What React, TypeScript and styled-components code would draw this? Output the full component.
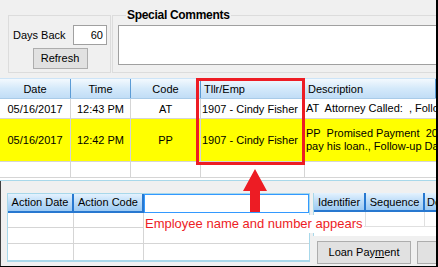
import React from "react";
import styled, { createGlobalStyle } from "styled-components";

const Global = createGlobalStyle`
  html, body { margin: 0; padding: 0; background: #f0f0f0; }
  body { font-family: "Liberation Sans", Arial, sans-serif; font-size: 11px; color: #000; }
  * { box-sizing: border-box; }
`;

const Window = styled.div`
  position: relative;
  width: 438px;
  height: 267px;
  background: #f0f0f0;
  border-right: 2px solid #000;
  border-bottom: 1px solid #000;
  overflow: hidden;
  display: flex;
  flex-direction: column;
`;

const TopSection = styled.div`
  height: 78px;
  display: flex;
  align-items: flex-start;
  padding: 8px 0 0 8px;
  gap: 1px;
`;

const DaysGroup = styled.div`
  margin-top: 7px;
  width: 103px;
  height: 58px;
  border: 1px solid #dcdcdc;
  display: flex;
  flex-direction: column;
  align-items: center;
  padding: 9px 3px 0 4px;
`;

const DaysRow = styled.div`
  width: 100%;
  display: flex;
  align-items: center;
  justify-content: space-between;
`;

const Label = styled.span`
  line-height: 13px;
`;

const NumberInput = styled.div`
  width: 34px;
  height: 20px;
  background: #fff;
  border: 1px solid #a0a0a0;
  text-align: right;
  padding: 2px 3px 0 0;
  line-height: 14px;
`;

const PushButton = styled.div<{ $w: number }>`
  width: ${(p) => p.$w}px;
  height: ${(p) => (p.$w > 80 ? 23 : 21)}px;
  background: #e1e1e1;
  border: 1px solid #adadad;
  display: flex;
  align-items: center;
  justify-content: center;
  line-height: 13px;
  flex-shrink: 0;
  white-space: nowrap;
`;

const RefreshButton = styled(PushButton)`
  margin-top: 3px;
`;

const CommentsGroup = styled.fieldset`
  margin: 0;
  flex: 1;
  height: 65px;
  border: 1px solid #dcdcdc;
  border-right: none;
  padding: 3px 0 0 5px;
  min-width: 0;
`;

const Legend = styled.legend`
  margin-left: 8px;
  padding: 0 1px;
  font-weight: bold;
  font-size: 12px;
  letter-spacing: -0.3px;
  line-height: 14px;
`;

const CommentBox = styled.div`
  height: 40px;
  background: #fff;
  border: 1px solid #a0a0a0;
  border-right: none;
`;

const Grid = styled.div`
  height: 103px;
  background: #fff;
  border-bottom: 1px solid #a8d8ea;
  display: flex;
  flex-direction: column;
`;

const cols = "71px 60px 70px 104px 1fr";

const HeaderRow = styled.div`
  display: grid;
  grid-template-columns: ${cols};
  height: 21px;
  border-top: 1px solid #cde4f7;
  background: linear-gradient(#f3f9fe, #d4e9fa 50%, #c1ddf6);
  border-bottom: 1px solid #a9cbe8;
`;

const HeadCell = styled.div<{ $align?: string }>`
  display: flex;
  align-items: center;
  justify-content: ${(p) => p.$align || "center"};
  padding-left: ${(p) => (p.$align ? 3 : 0)}px;
  border-right: 1px solid #5b9bd5;
  white-space: nowrap;
  overflow: hidden;
`;

const Row = styled.div<{ $h: number; $bg?: string }>`
  display: grid;
  grid-template-columns: ${cols};
  height: ${(p) => p.$h}px;
  background: ${(p) => p.$bg || "#fff"};
  border-bottom: 1px solid #d5d5d5;
`;

const Cell = styled.div<{ $align?: string }>`
  display: flex;
  align-items: center;
  justify-content: ${(p) => p.$align || "center"};
  padding-left: ${(p) => (p.$align ? 1 : 0)}px;
  border-right: 1px solid #d5d5d5;
  white-space: nowrap;
  overflow: hidden;
`;

const DescCell = styled.div`
  display: flex;
  flex-direction: column;
  justify-content: center;
  padding-left: 1px;
  white-space: pre;
  overflow: hidden;
  line-height: 13px;
`;

const LowerPanel = styled.div`
  flex: 1;
  display: flex;
  align-items: flex-start;
  padding: 12px 0 0 6px;
  gap: 3px;
  border-left: 1px solid #404040;
`;

const ActionGrid = styled.div`
  width: 303px;
  height: 69px;
  background: #fff;
  border: 1px solid #a8d8ea;
  border-bottom-width: 2px;
  display: flex;
  flex-direction: column;
`;

const actionCols = "66px 70px 1fr";

const ActionHeader = styled.div`
  display: grid;
  grid-template-columns: ${actionCols};
  height: 19px;
`;

const BlueHeadCell = styled.div<{ $w?: number; $left?: boolean }>`
  display: flex;
  align-items: center;
  justify-content: ${(p) => (p.$left ? "flex-start" : "center")};
  padding-left: ${(p) => (p.$left ? 2 : 0)}px;
  background: linear-gradient(#e4f2fe, #bcdcf8 50%, #9dcaf3);
  border-right: 2px solid #2878d0;
  border-bottom: 2px solid #2878d0;
  white-space: nowrap;
  overflow: hidden;
  ${(p) => (p.$w ? `width: ${p.$w}px; flex-shrink: 0;` : "")}
`;

const FocusCell = styled.div`
  background: #fff;
  border: 1px solid #3399ff;
`;

const ActionRow = styled.div<{ $h: number }>`
  display: grid;
  grid-template-columns: ${actionCols};
  height: ${(p) => p.$h}px;
  border-bottom: 1px solid #d5d5d5;
  &:last-child { border-bottom: none; }
`;

const PlainCell = styled.div`
  border-right: 1px solid #d5d5d5;
  &:last-child { border-right: none; }
`;

const RightColumn = styled.div`
  flex: 1;
  display: flex;
  flex-direction: column;
  gap: 5px;
  min-width: 0;
`;

const IdGrid = styled.div`
  height: 43px;
  background: #fff;
  border-left: 1px solid #a8d8ea;
  display: flex;
  flex-direction: column;
`;

const IdHeader = styled.div`
  display: flex;
  height: 19px;
`;

const IdRow = styled.div<{ $h: number }>`
  display: flex;
  height: ${(p) => p.$h}px;
  border-bottom: 1px solid #e0e0e0;
`;

const IdCell = styled.div<{ $w: number }>`
  width: ${(p) => p.$w}px;
  flex-shrink: 0;
  border-right: 1px solid #e0e0e0;
`;

const ButtonRow = styled.div`
  display: flex;
  gap: 6px;
  padding-left: 4px;
`;

const Underline = styled.span`
  text-decoration: underline;
`;

const RedBox = styled.div`
  position: absolute;
  left: 196px;
  top: 78px;
  width: 109px;
  height: 87px;
  border: 3px solid #ed1c24;
  pointer-events: none;
`;

const ArrowSvg = styled.svg`
  position: absolute;
  left: 0;
  top: 0;
  pointer-events: none;
`;

const Note = styled.div`
  position: absolute;
  left: 144px;
  top: 215px;
  width: 220px;
  height: 18px;
  background: #fff;
  color: #ed1c24;
  font-size: 13px;
  line-height: 17px;
  padding-left: 1px;
  white-space: nowrap;
`;

export default function App() {
  return (
    <>
      <Global />
      <Window>
        <TopSection>
          <DaysGroup>
            <DaysRow>
              <Label>Days Back</Label>
              <NumberInput>60</NumberInput>
            </DaysRow>
            <RefreshButton $w={55}>Refresh</RefreshButton>
          </DaysGroup>
          <CommentsGroup>
            <Legend>Special Comments</Legend>
            <CommentBox />
          </CommentsGroup>
        </TopSection>

        <Grid>
          <HeaderRow>
            <HeadCell>Date</HeadCell>
            <HeadCell>Time</HeadCell>
            <HeadCell>Code</HeadCell>
            <HeadCell $align="flex-start">Tllr/Emp</HeadCell>
            <HeadCell $align="flex-start">Description</HeadCell>
          </HeaderRow>
          <Row $h={20}>
            <Cell>05/16/2017</Cell>
            <Cell>12:43 PM</Cell>
            <Cell>AT</Cell>
            <Cell $align="flex-start">1907 - Cindy Fisher</Cell>
            <DescCell>{"AT  Attorney Called:  , Follow-up Date: 05/23/2017"}</DescCell>
          </Row>
          <Row $h={43} $bg="#ffff00">
            <Cell>05/16/2017</Cell>
            <Cell>12:42 PM</Cell>
            <Cell>PP</Cell>
            <Cell $align="flex-start">1907 - Cindy Fisher</Cell>
            <DescCell>
              <span>{"PP  Promised Payment  2017-05-20: Borrower promised to"}</span>
              <span>{"pay his loan., Follow-up Date: 05/20/2017"}</span>
            </DescCell>
          </Row>
          <Row $h={16}>
            <Cell />
            <Cell />
            <Cell />
            <Cell />
            <DescCell />
          </Row>
        </Grid>

        <LowerPanel>
          <ActionGrid>
            <ActionHeader>
              <BlueHeadCell>Action Date</BlueHeadCell>
              <BlueHeadCell>Action Code</BlueHeadCell>
              <FocusCell />
            </ActionHeader>
            <ActionRow $h={16}>
              <PlainCell />
              <PlainCell />
              <PlainCell />
            </ActionRow>
            <ActionRow $h={16}>
              <PlainCell />
              <PlainCell />
              <PlainCell />
            </ActionRow>
            <ActionRow $h={16}>
              <PlainCell />
              <PlainCell />
              <PlainCell />
            </ActionRow>
          </ActionGrid>
          <RightColumn>
            <IdGrid>
              <IdHeader>
                <BlueHeadCell $w={52}>Identifier</BlueHeadCell>
                <BlueHeadCell $w={59}>Sequence</BlueHeadCell>
                <BlueHeadCell $w={30} $left>Description</BlueHeadCell>
              </IdHeader>
              <IdRow $h={15}>
                <IdCell $w={52} />
                <IdCell $w={59} />
                <IdCell $w={30} />
              </IdRow>
            </IdGrid>
            <ButtonRow>
              <PushButton $w={94}>
                Loan Pay<Underline>m</Underline>ent
              </PushButton>
              <PushButton $w={94} />
            </ButtonRow>
          </RightColumn>
        </LowerPanel>

        <RedBox />
        <ArrowSvg width="438" height="267" viewBox="0 0 438 267">
          <polygon
            points="255,169 243,191 250,191 250,212 260,212 260,191 267,191"
            fill="#ed1c24"
          />
        </ArrowSvg>
        <Note>Employee name and number appears</Note>
      </Window>
    </>
  );
}
